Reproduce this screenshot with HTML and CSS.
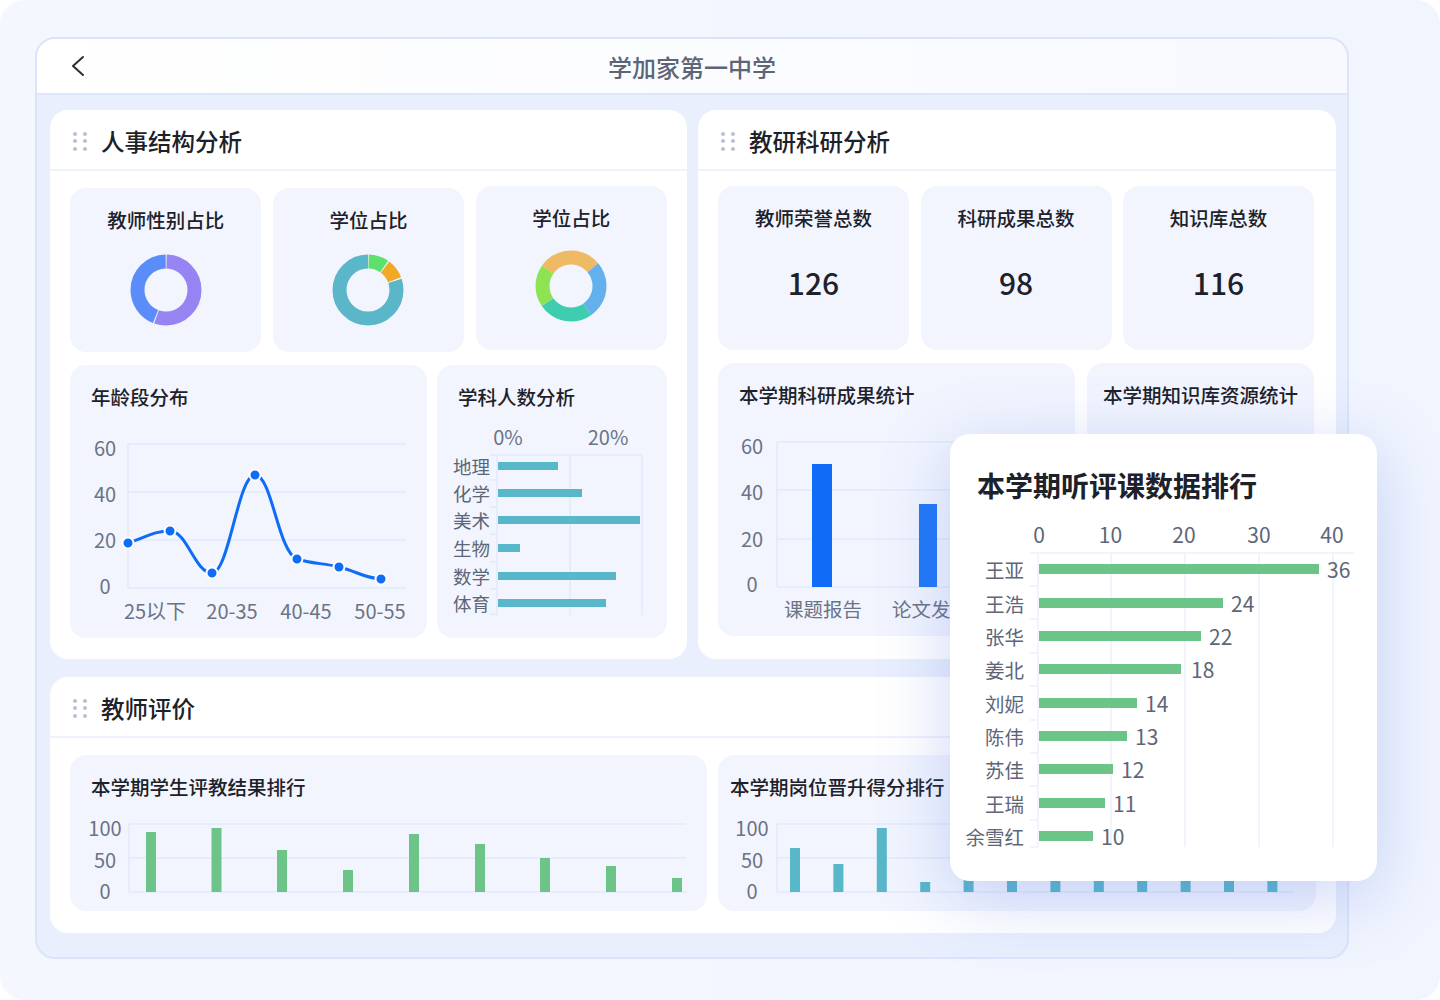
FILE: index.html
```html
<!DOCTYPE html>
<html lang="zh-CN">
<head>
  <meta charset="UTF-8">
  <meta name="viewport" content="width=device-width, initial-scale=1.0">
  <title>学加家第一中学</title>
  <link rel="stylesheet" href="styles.css">
</head>
<body>
<div class="page">
  <div class="frame">
    <div class="topbar">
      <svg class="back" width="16" height="22" viewBox="0 0 16 22"><path d="M13 2 L3 11 L13 20" fill="none" stroke="#2b2f36" stroke-width="2" stroke-linecap="round" stroke-linejoin="round"/></svg>
      <span class="topbar-title">学加家第一中学</span>
      <span></span>
    </div>

    <div class="content">
      <div class="row-top">
        <!-- 人事结构分析 -->
        <section class="panel">
          <div class="panel-head">
            <span class="grip"><i></i><i></i><i></i><i></i><i></i><i></i></span>
            <h2>人事结构分析</h2>
          </div>
          <div class="panel-body">
            <div class="grid3">
              <div class="card center">
                <h3>教师性别占比</h3>
                <svg class="donut" width="72" height="72" viewBox="0 0 72 72">
                  <g transform="rotate(-90 36 36)" fill="none" stroke-width="14">
                    <circle cx="36" cy="36" r="28.5" stroke="#9584f1" stroke-dasharray="98.5 80.57" stroke-dashoffset="-0.6"/>
                    <circle cx="36" cy="36" r="28.5" stroke="#5a8cfa" stroke-dasharray="78.4 100.67" stroke-dashoffset="-100.1"/>
                  </g>
                </svg>
              </div>
              <div class="card center">
                <h3>学位占比</h3>
                <svg class="donut" width="72" height="72" viewBox="0 0 72 72">
                  <g transform="rotate(-90 36 36)" fill="none" stroke-width="14">
                    <circle cx="36" cy="36" r="28.5" stroke="#5ee06d" stroke-dasharray="16.6 162.47" stroke-dashoffset="-0.6"/>
                    <circle cx="36" cy="36" r="28.5" stroke="#f1aa25" stroke-dasharray="16 163.07" stroke-dashoffset="-18.2"/>
                    <circle cx="36" cy="36" r="28.5" stroke="#5ab6c8" stroke-dasharray="143.5 35.57" stroke-dashoffset="-35.4"/>
                  </g>
                </svg>
              </div>
              <div class="card center lift">
                <h3>学位占比</h3>
                <svg class="donut" width="72" height="72" viewBox="0 0 72 72">
                  <g transform="rotate(-145 36 36)" fill="none" stroke-width="14">
                    <circle cx="36" cy="36" r="28.5" stroke="#efba66" stroke-dasharray="52.2 126.87"/>
                    <circle cx="36" cy="36" r="28.5" stroke="#63b0ec" stroke-dasharray="47.3 131.77" stroke-dashoffset="-52.2"/>
                    <circle cx="36" cy="36" r="28.5" stroke="#3fcdaf" stroke-dasharray="44.8 134.27" stroke-dashoffset="-99.5"/>
                    <circle cx="36" cy="36" r="28.5" stroke="#8ee352" stroke-dasharray="34.8 144.27" stroke-dashoffset="-144.3"/>
                  </g>
                </svg>
              </div>
            </div>

            <div class="grid2">
              <div class="card">
                <h3>年龄段分布</h3>
                <svg class="chart" width="357" height="218" viewBox="70 420 357 218">
                  <g class="grid-line">
                    <line x1="128" y1="444" x2="406" y2="444"/>
                    <line x1="128" y1="492" x2="406" y2="492"/>
                    <line x1="128" y1="540" x2="406" y2="540"/>
                    <line x1="128" y1="588" x2="406" y2="588"/>
                    <line x1="128" y1="444" x2="128" y2="588"/>
                  </g>
                  <g class="axis-label" text-anchor="middle">
                    <text x="105" y="447">60</text>
                    <text x="105" y="493">40</text>
                    <text x="105" y="539">20</text>
                    <text x="105" y="585">0</text>
                    <text x="155" y="610">25以下</text>
                    <text x="232" y="610">20-35</text>
                    <text x="306" y="610">40-45</text>
                    <text x="380" y="610">50-55</text>
                  </g>
                  <path class="line" d="M128 543 C145 538 153 531 170 531 C187 531 195 573 212 573 C229 573 238 475 255 475 C272 475 278 552 297 559 C312 564 324 563 339 567 C356 571 364 578 381 579"/>
                  <g class="dot">
                    <circle cx="128" cy="543" r="5.5"/>
                    <circle cx="170" cy="531" r="5.5"/>
                    <circle cx="212" cy="573" r="5.5"/>
                    <circle cx="255" cy="475" r="5.5"/>
                    <circle cx="297" cy="559" r="5.5"/>
                    <circle cx="339" cy="567" r="5.5"/>
                    <circle cx="381" cy="579" r="5.5"/>
                  </g>
                </svg>
              </div>
              <div class="card">
                <h3>学科人数分析</h3>
                <svg class="chart" width="230" height="218" viewBox="437 420 230 218">
                  <g class="axis-label" text-anchor="middle">
                    <text x="508" y="436">0%</text>
                    <text x="608" y="436">20%</text>
                  </g>
                  <g class="grid-line">
                    <line x1="497" y1="455" x2="642" y2="455"/>
                    <line x1="570" y1="455" x2="570" y2="615"/>
                    <line x1="642" y1="455" x2="642" y2="615"/>
                    <line x1="497" y1="455" x2="497" y2="615"/>
                    <line x1="490" y1="455" x2="497" y2="455"/>
                    <line x1="490" y1="480" x2="497" y2="480"/>
                    <line x1="490" y1="507" x2="497" y2="507"/>
                    <line x1="490" y1="534" x2="497" y2="534"/>
                    <line x1="490" y1="562" x2="497" y2="562"/>
                    <line x1="490" y1="589" x2="497" y2="589"/>
                    <line x1="490" y1="614" x2="497" y2="614"/>
                  </g>
                  <g class="teal-bar">
                    <rect x="498" y="462" width="60" height="8"/>
                    <rect x="498" y="489" width="84" height="8"/>
                    <rect x="498" y="516" width="142" height="8"/>
                    <rect x="498" y="544" width="22" height="8"/>
                    <rect x="498" y="572" width="118" height="8"/>
                    <rect x="498" y="599" width="108" height="8"/>
                  </g>
                  <g class="cat-label" text-anchor="end">
                    <text x="490" y="466">地理</text>
                    <text x="490" y="493">化学</text>
                    <text x="490" y="520">美术</text>
                    <text x="490" y="548">生物</text>
                    <text x="490" y="576">数学</text>
                    <text x="490" y="603">体育</text>
                  </g>
                </svg>
              </div>
            </div>
          </div>
        </section>

        <!-- 教研科研分析 -->
        <section class="panel">
          <div class="panel-head">
            <span class="grip"><i></i><i></i><i></i><i></i><i></i><i></i></span>
            <h2>教研科研分析</h2>
          </div>
          <div class="panel-body narrow-right">
            <div class="grid3 lift-row">
              <div class="card center">
                <h3>教师荣誉总数</h3>
                <div class="stat-num">126</div>
              </div>
              <div class="card center">
                <h3>科研成果总数</h3>
                <div class="stat-num">98</div>
              </div>
              <div class="card center">
                <h3>知识库总数</h3>
                <div class="stat-num">116</div>
              </div>
            </div>

            <div class="grid2 wide-gap">
              <div class="card">
                <h3>本学期科研成果统计</h3>
                <svg class="chart" width="357" height="218" viewBox="718 420 357 218">
                  <g class="grid-line">
                    <line x1="777" y1="444" x2="1075" y2="444"/>
                    <line x1="777" y1="492" x2="1075" y2="492"/>
                    <line x1="777" y1="541" x2="1075" y2="541"/>
                    <line x1="777" y1="589" x2="1075" y2="589"/>
                    <line x1="777" y1="444" x2="777" y2="589"/>
                  </g>
                  <g class="axis-label" text-anchor="middle">
                    <text x="752" y="447">60</text>
                    <text x="752" y="493">40</text>
                    <text x="752" y="540">20</text>
                    <text x="752" y="585">0</text>
                  </g>
                  <rect x="812" y="466" width="20" height="123" fill="#0f6cf6"/>
                  <rect x="919" y="506" width="18" height="83" fill="#1f77f5"/>
                  <rect x="1026" y="530" width="19" height="59" fill="#1f77f5"/>
                  <g class="axis-label x-label" text-anchor="middle">
                    <text x="823" y="610">课题报告</text>
                    <text x="931" y="610">论文发表</text>
                  </g>
                </svg>
              </div>
              <div class="card">
                <h3 class="tight">本学期知识库资源统计</h3>
              </div>
            </div>
          </div>
        </section>
      </div>

      <!-- 教师评价 -->
      <section class="panel panel-wide">
        <div class="panel-head">
          <span class="grip"><i></i><i></i><i></i><i></i><i></i><i></i></span>
          <h2>教师评价</h2>
        </div>
        <div class="panel-body">
          <div class="grid-eval">
            <div class="card">
              <h3>本学期学生评教结果排行</h3>
              <svg class="chart" width="637" height="101" viewBox="70 810 637 101">
                <g class="grid-line">
                  <line x1="129" y1="824" x2="686" y2="824"/>
                  <line x1="129" y1="858" x2="686" y2="858"/>
                  <line x1="129" y1="892" x2="686" y2="892"/>
                  <line x1="129" y1="824" x2="129" y2="892"/>
                </g>
                <g class="axis-label" text-anchor="middle">
                  <text x="105" y="827">100</text>
                  <text x="105" y="859">50</text>
                  <text x="105" y="890">0</text>
                </g>
                <g class="green-bar">
                  <rect x="146" y="832" width="10" height="60"/>
                  <rect x="211.5" y="828" width="10" height="64"/>
                  <rect x="277" y="850" width="10" height="42"/>
                  <rect x="343" y="870" width="10" height="22"/>
                  <rect x="409" y="834" width="10" height="58"/>
                  <rect x="475" y="844" width="10" height="48"/>
                  <rect x="540" y="858" width="10" height="34"/>
                  <rect x="606" y="866" width="10" height="26"/>
                  <rect x="672" y="878" width="10" height="14"/>
                </g>
              </svg>
            </div>
            <div class="card">
              <h3 class="tighter">本学期岗位晋升得分排行</h3>
              <svg class="chart" width="598" height="101" viewBox="718 810 598 101">
                <g class="grid-line">
                  <line x1="777" y1="824" x2="1294" y2="824"/>
                  <line x1="777" y1="858" x2="1294" y2="858"/>
                  <line x1="777" y1="892" x2="1294" y2="892"/>
                  <line x1="777" y1="824" x2="777" y2="892"/>
                </g>
                <g class="axis-label" text-anchor="middle">
                  <text x="752" y="827">100</text>
                  <text x="752" y="859">50</text>
                  <text x="752" y="890">0</text>
                </g>
                <g class="teal-bar">
                  <rect x="790" y="848" width="10" height="44"/>
                  <rect x="833.4" y="864" width="10" height="28"/>
                  <rect x="876.8" y="828" width="10" height="64"/>
                  <rect x="920.2" y="882" width="10" height="10"/>
                  <rect x="963.6" y="860" width="10" height="32"/>
                  <rect x="1007" y="845" width="10" height="47"/>
                  <rect x="1050.4" y="870" width="10" height="22"/>
                  <rect x="1093.8" y="850" width="10" height="42"/>
                  <rect x="1137.2" y="838" width="10" height="54"/>
                  <rect x="1180.6" y="866" width="10" height="26"/>
                  <rect x="1224" y="855" width="10" height="37"/>
                  <rect x="1267.4" y="872" width="10" height="20"/>
                </g>
              </svg>
            </div>
          </div>
        </div>
      </section>
    </div>
  </div>

  <!-- 弹出卡片 -->
  <div class="popup">
    <h2>本学期听评课数据排行</h2>
    <svg class="chart" width="427" height="352" viewBox="950 514 427 352">
      <g class="popup-axis" text-anchor="middle">
        <text x="1039" y="534">0</text>
        <text x="1110.5" y="534">10</text>
        <text x="1184" y="534">20</text>
        <text x="1259" y="534">30</text>
        <text x="1332" y="534">40</text>
      </g>
      <g class="popup-grid">
        <line x1="1030" y1="553" x2="1354" y2="553"/>
        <line x1="1038" y1="553" x2="1038" y2="847"/>
        <line x1="1111" y1="553" x2="1111" y2="847"/>
        <line x1="1185" y1="553" x2="1185" y2="847"/>
        <line x1="1259" y1="553" x2="1259" y2="847"/>
        <line x1="1333" y1="553" x2="1333" y2="847"/>
        <line x1="1030" y1="586" x2="1038" y2="586"/>
        <line x1="1030" y1="619" x2="1038" y2="619"/>
        <line x1="1030" y1="653" x2="1038" y2="653"/>
        <line x1="1030" y1="686" x2="1038" y2="686"/>
        <line x1="1030" y1="720" x2="1038" y2="720"/>
        <line x1="1030" y1="753" x2="1038" y2="753"/>
        <line x1="1030" y1="786" x2="1038" y2="786"/>
        <line x1="1030" y1="820" x2="1038" y2="820"/>
        <line x1="1030" y1="847" x2="1038" y2="847"/>
      </g>
      <g class="green-bar">
        <rect x="1039" y="564" width="280" height="10"/>
        <rect x="1039" y="598" width="184" height="10"/>
        <rect x="1039" y="631" width="162" height="10"/>
        <rect x="1039" y="664" width="142" height="10"/>
        <rect x="1039" y="698" width="98" height="10"/>
        <rect x="1039" y="731" width="88" height="10"/>
        <rect x="1039" y="764" width="74" height="10"/>
        <rect x="1039" y="798" width="66" height="10"/>
        <rect x="1039" y="831" width="54" height="10"/>
      </g>
      <g class="popup-name" text-anchor="end">
        <text x="1024" y="569">王亚</text>
        <text x="1024" y="603">王浩</text>
        <text x="1024" y="636">张华</text>
        <text x="1024" y="669">姜北</text>
        <text x="1024" y="703">刘妮</text>
        <text x="1024" y="736">陈伟</text>
        <text x="1024" y="769">苏佳</text>
        <text x="1024" y="803">王瑞</text>
        <text x="1024" y="836">余雪红</text>
      </g>
      <g class="popup-value">
        <text x="1327" y="569">36</text>
        <text x="1231" y="603">24</text>
        <text x="1209" y="636">22</text>
        <text x="1191" y="669">18</text>
        <text x="1145" y="703">14</text>
        <text x="1135" y="736">13</text>
        <text x="1121" y="769">12</text>
        <text x="1113" y="803">11</text>
        <text x="1101" y="836">10</text>
      </g>
    </svg>
  </div>
</div>
</body>
</html>
```

FILE: styles.css
```css
body {
  margin: 0;
  background: #fff;
  font-family: "Noto Sans CJK SC", "Noto Sans", sans-serif;
  color: #1d2129;
}
.page {
  position: relative;
  width: 1440px;
  height: 1000px;
  box-sizing: border-box;
  padding-top: 37px;
  border-radius: 24px;
  background: linear-gradient(90deg, #f5f7fe, #f1f5fe);
  overflow: hidden;
}
.frame {
  margin-left: 35px;
  width: 1314px;
  height: 922px;
  box-sizing: border-box;
  border: 2px solid #dbe4fb;
  border-radius: 20px;
  background: #e9effd;
  overflow: hidden;
}
.topbar {
  height: 56px;
  box-sizing: border-box;
  border-bottom: 2px solid #dce5fa;
  background: linear-gradient(90deg, #fff, #f7f9fe);
  display: grid;
  grid-template-columns: 1fr auto 1fr;
  align-items: center;
  padding: 0 33px;
}
.back {
  display: block;
}
.topbar-title {
  font-size: 24px;
  color: #5d6677;
  font-weight: 500;
}
.content {
  padding: 15px 11px 0 13px;
}
.row-top {
  display: grid;
  grid-template-columns: 637px 638px;
  gap: 11px;
  height: 549px;
}
.panel {
  background: #fff;
  border-radius: 18px;
  overflow: hidden;
}
.panel-wide {
  margin-top: 18px;
  height: 256px;
}
.panel-head {
  height: 61px;
  box-sizing: border-box;
  border-bottom: 2px solid #eef2fc;
  display: flex;
  align-items: center;
  padding: 3px 0 0 23px;
}
.grip {
  display: grid;
  grid-template-columns: 4px 4px;
  column-gap: 6px;
  row-gap: 3.5px;
  margin-right: 14px;
}
.grip i {
  width: 4px;
  height: 4px;
  border-radius: 50%;
  background: #b8c0d2;
}
.panel-head h2 {
  margin: 0;
  font-size: 23.5px;
  font-weight: 500;
  color: #1d2129;
}
.panel-body {
  padding: 17px 20px 0;
}
.panel-body.narrow-right {
  padding-right: 22px;
}
.grid3 {
  display: grid;
  grid-template-columns: repeat(3, 1fr);
  gap: 11.5px;
  height: 164px;
}
.lift-row {
  margin-top: -2px;
  margin-bottom: 2px;
}
.grid2 {
  display: grid;
  grid-template-columns: 357px 1fr;
  gap: 10px;
  height: 273px;
  margin-top: 13px;
}
.grid2.wide-gap {
  gap: 12px;
}
.grid-eval {
  display: grid;
  grid-template-columns: 637px 1fr;
  gap: 11px;
  height: 156px;
}
.card {
  background: #f2f5fe;
  border-radius: 16px;
  overflow: hidden;
}
.card.center {
  text-align: center;
}
.card.lift {
  margin-top: -2px;
  margin-bottom: 2px;
}
.card.lift .donut {
  margin-top: 20px;
}
.card h3 {
  margin: 0;
  padding: 20px 21px 0;
  font-size: 19.5px;
  line-height: 24px;
  font-weight: 500;
  color: #1d2129;
  white-space: nowrap;
}
.card h3.tight {
  padding-left: 16px;
}
.card h3.tighter {
  padding-left: 12px;
}
.donut {
  display: block;
  margin: 22px auto 0;
}
.stat-num {
  margin-top: 34px;
  font-size: 30px;
  line-height: 36px;
  font-weight: 500;
  color: #1d2129;
}
.chart {
  display: block;
  margin-top: 11px;
}
.grid-line line {
  stroke: #e1e9fc;
  stroke-width: 1.5;
}
.axis-label text {
  font-size: 20px;
  fill: #6b7385;
  dominant-baseline: central;
}
.x-label text {
  font-size: 19.5px;
}
.cat-label text {
  font-size: 18.5px;
  fill: #5d6677;
  dominant-baseline: central;
}
.line {
  fill: none;
  stroke: #0f6cf6;
  stroke-width: 3;
  stroke-linecap: round;
}
.dot circle {
  fill: #0f6cf6;
  stroke: #fff;
  stroke-width: 2;
}
.teal-bar rect {
  fill: #58b7c8;
}
.green-bar rect {
  fill: #6cc488;
}
.popup {
  position: absolute;
  left: 950px;
  top: 434px;
  width: 427px;
  height: 447px;
  background: #fff;
  border-radius: 20px;
  box-shadow: 0 16px 70px rgba(88, 120, 225, 0.3);
}
.popup h2 {
  margin: 0;
  padding: 34px 0 0 27px;
  font-size: 28px;
  line-height: 34px;
  font-weight: 700;
  color: #1d2129;
}
.popup .chart {
  margin-top: 12px;
}
.popup-axis text,
.popup-value text {
  font-size: 21px;
  fill: #5d6677;
  dominant-baseline: central;
}
.popup-name text {
  font-size: 19.5px;
  fill: #5d6677;
  dominant-baseline: central;
}
.popup-grid line {
  stroke: #edf0fb;
  stroke-width: 1.5;
}
```
